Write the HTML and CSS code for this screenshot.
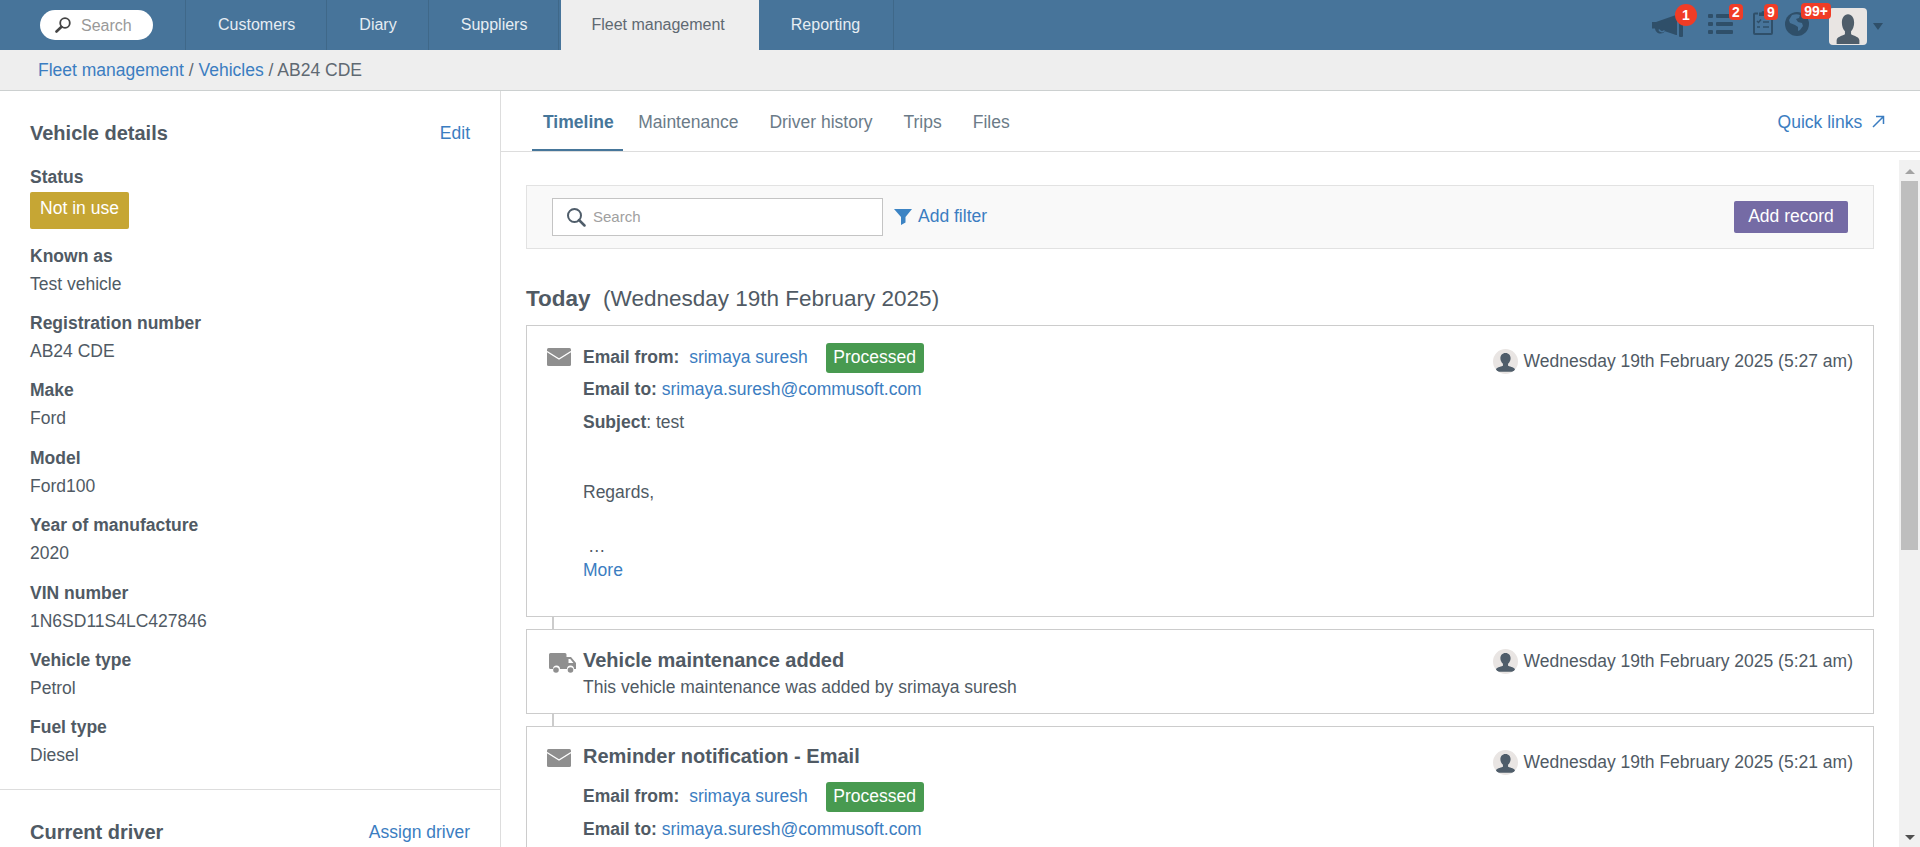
FILE: index.html
```html
<!DOCTYPE html>
<html lang="en">
<head>
    <meta charset="UTF-8">
    <meta name="viewport" content="width=device-width, initial-scale=1.0">
    <title>AB24 CDE - Fleet management</title>
    <link rel="stylesheet" href="styles.css">
</head>
<body>
    <svg class="sprites" width="0" height="0" aria-hidden="true">
        <symbol id="icon-envelope" viewBox="0 0 24 18">
            <rect width="24" height="18" rx="1.5" fill="#8f8f8f"/>
            <path d="M0 3.5 12 11 24 3.5" fill="none" stroke="#fff" stroke-width="1.4"/>
        </symbol>
        <symbol id="icon-person" viewBox="3 3 32 32" preserveAspectRatio="none">
            <path d="M19 5c-4.400 0-7 3.400-7 8 0 3.400 1.500 6.300 3.500 8v3c-4 1.700-9 2.500-9.500 5.500V33h26v-3.500c-.5-3-5.500-3.800-9.500-5.500v-3c2-1.700 3.500-4.600 3.500-8 0-4.600-2.600-8-7-8z" fill="#4f5d6a"/>
        </symbol>
    </svg>

    <header class="topbar">
        <div class="topbar-search">
            <svg class="topbar-search-icon" width="16" height="16" viewBox="0 0 16 16">
                <circle cx="10" cy="6" r="4.800" fill="none" stroke="#444" stroke-width="1.800"/>
                <path d="M6.500 9.800 1.500 14.500" stroke="#444" stroke-width="2.600" stroke-linecap="round"/>
            </svg>
            <span>Search</span>
        </div>
        <nav class="topbar-tabs">
            <a class="topbar-tab">Customers</a>
            <a class="topbar-tab">Diary</a>
            <a class="topbar-tab">Suppliers</a>
            <a class="topbar-tab active">Fleet management</a>
            <a class="topbar-tab">Reporting</a>
        </nav>
        <div class="topbar-icons">
            <div class="topbar-icon icon-megaphone">
                <svg width="32" height="22" viewBox="0 0 32 22">
                    <path d="M0 7h4l20-7h1v20h-1L13 16.200a5.500 5.500 0 0 1-10-2.600H0z" fill="#2f4f69"/>
                    <path d="M7 14.500a3.200 3.200 0 0 0 5.500 1" fill="none" stroke="#47749a" stroke-width="1.500"/>
                    <rect x="27" width="4" height="22" rx="1" fill="#2f4f69"/>
                </svg>
                <span class="count round">1</span>
            </div>
            <div class="topbar-icon icon-list">
                <svg width="25" height="22" viewBox="0 0 25 22">
                    <g fill="#2f4f69">
                        <rect y="1" width="5" height="4" rx="1"/><rect x="8" y="1" width="17" height="4" rx="1"/>
                        <rect y="9" width="5" height="4" rx="1"/><rect x="8" y="9" width="17" height="4" rx="1"/>
                        <rect y="17" width="5" height="4" rx="1"/><rect x="8" y="17" width="17" height="4" rx="1"/>
                    </g>
                </svg>
                <span class="count">2</span>
            </div>
            <div class="topbar-icon icon-clip">
                <svg width="20" height="25" viewBox="0 0 20 25">
                    <path d="M5 3.500H2a1 1 0 0 0-1 1V23a1 1 0 0 0 1 1h16a1 1 0 0 0 1-1V4.500a1 1 0 0 0-1-1h-3" fill="none" stroke="#2f4f69" stroke-width="2"/>
                    <path d="M6 5V2.500h2.500a1.500 1.500 0 0 1 3 0H14V6H6z" fill="#2f4f69"/>
                    <path d="M4 11l1.500 1.500L8 9.500M4 17h3M10 12h6M10 17h6" fill="none" stroke="#2f4f69" stroke-width="1.500"/>
                </svg>
                <span class="count">9</span>
            </div>
            <div class="topbar-icon icon-globe">
                <svg width="24" height="24" viewBox="0 0 24 24">
                    <circle cx="12" cy="12" r="12" fill="#2f4f69"/>
                    <path d="M7 3c3-1 6-1 8 0l-1 3-3 1 2 3 4 1 1 3-3 4-2 1 0-4-3-2-5-2-1-3z" fill="#47749a"/>
                </svg>
                <span class="count wide">99+</span>
            </div>
            <div class="topbar-avatar">
                <svg width="28" height="34"><use href="#icon-person"/></svg>
            </div>
            <span class="topbar-caret"></span>
        </div>
    </header>

    <div class="breadcrumbs">
        <a>Fleet management</a> / <a>Vehicles</a> / AB24 CDE
    </div>

    <div class="page">
        <aside class="sidebar">
            <section class="side-section">
                <div class="side-head">
                    <h2>Vehicle details</h2>
                    <a>Edit</a>
                </div>
                <div class="field field-status">
                    <div class="field-label">Status</div>
                    <span class="status-badge">Not in use</span>
                </div>
                <div class="field"><div class="field-label">Known as</div><div>Test vehicle</div></div>
                <div class="field"><div class="field-label">Registration number</div><div>AB24 CDE</div></div>
                <div class="field"><div class="field-label">Make</div><div>Ford</div></div>
                <div class="field"><div class="field-label">Model</div><div>Ford100</div></div>
                <div class="field"><div class="field-label">Year of manufacture</div><div>2020</div></div>
                <div class="field"><div class="field-label">VIN number</div><div>1N6SD11S4LC427846</div></div>
                <div class="field"><div class="field-label">Vehicle type</div><div>Petrol</div></div>
                <div class="field"><div class="field-label">Fuel type</div><div>Diesel</div></div>
            </section>
            <section class="side-section driver">
                <div class="side-head">
                    <h2>Current driver</h2>
                    <a>Assign driver</a>
                </div>
            </section>
        </aside>

        <main class="content">
            <div class="content-tabs">
                <a class="content-tab active">Timeline</a>
                <a class="content-tab">Maintenance</a>
                <a class="content-tab">Driver history</a>
                <a class="content-tab">Trips</a>
                <a class="content-tab">Files</a>
                <a class="quick-links">Quick links
                    <svg width="13" height="13" viewBox="0 0 13 13"><path d="M1 12 11.500 1.500M4 1.500h7.500V9" fill="none" stroke="#3b7dc1" stroke-width="1.500"/></svg>
                </a>
            </div>

            <div class="content-body">
                <div class="timeline">
                    <div class="filter-bar">
                        <label class="filter-search">
                            <svg width="20" height="20" viewBox="0 0 20 20">
                                <circle cx="8.500" cy="8.500" r="6.500" fill="none" stroke="#4f5d6a" stroke-width="2"/>
                                <path d="M13 13l5.500 5.500" stroke="#4f5d6a" stroke-width="2.500" stroke-linecap="round"/>
                            </svg>
                            <input type="text" placeholder="Search">
                        </label>
                        <svg class="filter-icon" width="18" height="16" viewBox="0 0 18 16"><path d="M0 0h18l-6.500 8v5.500L7 16V8z" fill="#3c84c4"/></svg>
                        <a class="add-filter">Add filter</a>
                        <button class="add-record">Add record</button>
                    </div>

                    <h3 class="day-title"><b>Today</b>&nbsp; (Wednesday 19th February 2025)</h3>

                    <article class="card card-email">
                        <svg class="card-icon" width="24" height="18"><use href="#icon-envelope"/></svg>
                        <div class="card-body">
                            <div class="line line-from"><b>Email from:</b> <a class="sender">srimaya suresh</a><span class="state">Processed</span></div>
                            <div class="line"><b>Email to:</b> <a>srimaya.suresh@commusoft.com</a></div>
                            <div class="line subject"><b>Subject</b>: test</div>
                            <div class="regards">Regards,</div>
                            <div class="ellipsis">&hellip;</div>
                            <a class="more">More</a>
                        </div>
                        <div class="stamp">
                            <svg class="stamp-avatar" width="25" height="25"><use href="#icon-person" x="0.8" y="2.6" width="23.4" height="21.5"/></svg>
                            Wednesday 19th February 2025 (5:27 am)
                        </div>
                    </article>
                    <div class="connector"></div>

                    <article class="card card-maint">
                        <svg class="card-icon truck" width="28" height="21" viewBox="0 0 28 21">
                            <path d="M1.500 0H16a1.500 1.500 0 0 1 1.500 1.500V4h4.500l5 6v6h-2a3.500 3.500 0 0 0-7 0h-7a3.500 3.500 0 0 0-7 0H1.500A1.500 1.500 0 0 1 0 14.500v-13A1.500 1.500 0 0 1 1.500 0zM19.500 6v4h5l-3.300-4z" fill="#8f8f8f" fill-rule="evenodd"/>
                            <circle cx="7" cy="17" r="2.800" fill="#8f8f8f"/>
                            <circle cx="21.500" cy="17" r="2.800" fill="#8f8f8f"/>
                        </svg>
                        <div class="card-body">
                            <h4>Vehicle maintenance added</h4>
                            <div class="summary">This vehicle maintenance was added by srimaya suresh</div>
                        </div>
                        <div class="stamp">
                            <svg class="stamp-avatar" width="25" height="25"><use href="#icon-person" x="0.8" y="2.6" width="23.4" height="21.5"/></svg>
                            Wednesday 19th February 2025 (5:21 am)
                        </div>
                    </article>
                    <div class="connector"></div>

                    <article class="card card-reminder">
                        <svg class="card-icon" width="24" height="18"><use href="#icon-envelope"/></svg>
                        <div class="card-body">
                            <h4>Reminder notification - Email</h4>
                            <div class="line line-from"><b>Email from:</b> <a class="sender">srimaya suresh</a><span class="state">Processed</span></div>
                            <div class="line"><b>Email to:</b> <a>srimaya.suresh@commusoft.com</a></div>
                        </div>
                        <div class="stamp">
                            <svg class="stamp-avatar" width="25" height="25"><use href="#icon-person" x="0.8" y="2.6" width="23.4" height="21.5"/></svg>
                            Wednesday 19th February 2025 (5:21 am)
                        </div>
                    </article>
                </div>

                <div class="scrollbar">
                    <span class="scroll-up"></span>
                    <span class="scroll-thumb"></span>
                    <span class="scroll-down"></span>
                </div>
            </div>
        </main>
    </div>
</body>
</html>
```

FILE: styles.css
```css
/* General Styles */
* {
    box-sizing: border-box;
}

html, body {
    height: 100%;
}

body {
    font-family: 'Liberation Sans', Arial, sans-serif;
    font-size: 17.5px;
    color: #505a64;
    background: #fff;
    margin: 0;
    display: flex;
    flex-direction: column;
    overflow: hidden;
}

a {
    color: #3b7dc1;
}

.sprites {
    position: absolute;
}

/* Top bar */
.topbar {
    height: 50px;
    flex: none;
    display: flex;
    align-items: stretch;
    background: #47749a;
    font-size: 16px;
}

.topbar-search {
    width: 113px;
    height: 30px;
    margin: 10px 32px 0 40px;
    padding-left: 15px;
    display: flex;
    align-items: center;
    gap: 10px;
    background: #fff;
    border-radius: 15px;
    color: #999;
}

.topbar-search span {
    margin-top: 2px;
}

.topbar-tabs {
    display: flex;
    border-left: 1px solid #3f6889;
}

.topbar-tab {
    padding: 0 31px 0 32px;
    line-height: 50px;
    color: #e6edf3;
    border-right: 1px solid #3f6889;
}

.topbar-tab.active {
    margin-left: 2px;
    padding: 0 34px 0 30px;
    background: #eee;
    color: #5f6972;
    border-right: none;
}

.topbar-tab:last-child {
    padding-right: 33px;
}

.topbar-icons {
    margin-left: auto;
    display: flex;
    margin-right: 37px;
}

.topbar-icon {
    position: relative;
}

.icon-megaphone {
    margin-top: 15px;
    margin-right: 24px;
}

.icon-list {
    margin-top: 13px;
    margin-right: 20px;
}

.icon-clip {
    margin-top: 10px;
    margin-right: 12px;
}

.icon-globe {
    margin-top: 12px;
    margin-right: 20px;
}

.count {
    position: absolute;
    left: 21px;
    top: -9px;
    min-width: 14px;
    height: 16px;
    padding: 0 2px;
    border-radius: 4px;
    background: #f03c26;
    color: #fff;
    font-size: 14px;
    font-weight: bold;
    line-height: 16px;
    text-align: center;
}

.icon-clip .count {
    left: 11px;
    top: -6px;
}

.count.round {
    left: 23px;
    top: -11px;
    width: 22px;
    height: 22px;
    border-radius: 50%;
    line-height: 22px;
}

.count.wide {
    left: 16px;
    top: -9px;
    width: 30px;
    padding: 0;
}

.topbar-avatar {
    width: 38px;
    height: 37px;
    margin-top: 8px;
    padding: 4px 5px 0;
    background: #e9e5e3;
    border-radius: 4px;
}

.topbar-caret {
    margin: 23px 0 0 6px;
    border-left: 5.500px solid transparent;
    border-right: 5.500px solid transparent;
    border-top: 7px solid #2f4f69;
    height: 0;
}

/* Breadcrumbs */
.breadcrumbs {
    height: 41px;
    flex: none;
    padding-left: 38px;
    line-height: 40px;
    background: #eee;
    border-bottom: 1px solid #ccd0d0;
    color: #5f6972;
}

/* Page */
.page {
    flex: 1;
    min-height: 0;
    display: flex;
}

.sidebar {
    width: 501px;
    flex: none;
    border-right: 1px solid #ddd;
    overflow: hidden;
}

.side-section {
    padding: 30px 30px 0;
}

.side-head {
    display: flex;
    justify-content: space-between;
    align-items: center;
    height: 24px;
}

.side-head h2 {
    margin: 0;
    font-size: 20px;
}

.field {
    line-height: 28px;
    margin-bottom: 11.400px;
}

.field-label {
    font-weight: bold;
}

.field-status {
    margin-top: 17.500px;
    margin-bottom: 12.700px;
}

.status-badge {
    display: block;
    width: 99px;
    height: 37px;
    margin-top: 1.500px;
    line-height: 33px;
    text-align: center;
    color: #fff;
    background: #c6a634;
    border-radius: 2px;
}

.driver {
    margin-top: 20px;
    padding-top: 30px;
    border-top: 1px solid #ddd;
}

/* Content */
.content {
    flex: 1;
    min-width: 0;
    display: flex;
    flex-direction: column;
}

.content-tabs {
    height: 61px;
    flex: none;
    padding-left: 31px;
    display: flex;
    border-bottom: 1px solid #ddd;
}

.content-tab {
    padding: 3px 15.500px 0;
    line-height: 57px;
    color: #6b7b88;
}

.content-tab.active {
    padding: 3px 9px 0 11px;
    font-weight: bold;
    color: #46769a;
    height: 60px;
    border-bottom: 2px solid #46769a;
}

.quick-links {
    margin-left: auto;
    margin-right: 35px;
    padding-top: 3px;
    line-height: 57px;
}

.quick-links svg {
    margin-left: 5px;
}

.content-body {
    flex: 1;
    min-height: 0;
    display: flex;
}

.timeline {
    flex: 1;
    min-width: 0;
    padding: 33px 25px 0;
    overflow: hidden;
}

.filter-bar {
    height: 64px;
    padding: 0 25px;
    display: flex;
    align-items: center;
    background: #f9f9f9;
    border: 1px solid #e2e2e2;
}

.filter-search {
    width: 331px;
    height: 38px;
    padding-left: 13px;
    display: flex;
    align-items: center;
    gap: 5px;
    background: #fff;
    border: 1px solid #c4c4c4;
}

.filter-search input {
    border: none;
    outline: none;
    flex: 1;
    padding: 0 2px 2px;
    font: 15px 'Liberation Sans', Arial, sans-serif;
}

.filter-search input::placeholder {
    color: #a0a0a0;
}

.filter-icon {
    margin-left: 11px;
}

.add-filter {
    margin: 0 0 2px 6px;
}

.add-record {
    margin-left: auto;
    width: 114px;
    height: 32px;
    padding: 0 0 2px;
    font: 17.5px 'Liberation Sans', Arial, sans-serif;
    color: #fff;
    background: #756ba5;
    border: none;
    border-radius: 2px;
}

.day-title {
    margin: 37px 0 13px;
    font-size: 22.500px;
    font-weight: normal;
    line-height: 26px;
}

.card {
    display: flex;
    padding: 0 20px;
    border: 1px solid #ccc;
}

.card-icon {
    flex: none;
    margin-right: 12px;
    margin-top: 22px;
}

.card-icon.truck {
    margin: 23px 6px 0 2px;
}

.card-body {
    flex: 1;
    min-width: 0;
}

.card-body h4 {
    margin: 0;
    font-size: 20px;
    line-height: 24px;
}

.line {
    line-height: 32px;
}

.line-from {
    padding-top: 1px;
}

.subject {
    padding-top: 1px;
}

.sender {
    margin-left: 5px;
}

.state {
    display: inline-block;
    height: 30px;
    margin-left: 18px;
    padding: 0 7.500px;
    line-height: 28px;
    color: #fff;
    background: #489a50;
    border-radius: 3px;
}

.regards {
    margin-top: 40px;
    line-height: 28px;
}

.ellipsis {
    margin: 26px 0 0 5px;
    line-height: 28px;
}

.more {
    display: block;
    line-height: 20px;
}

.stamp {
    flex: none;
    display: flex;
    align-items: center;
    gap: 6px;
    height: 25px;
    margin-top: 23px;
}

.stamp-avatar {
    background: #e9e5e3;
    border-radius: 50%;
}

.connector {
    width: 2px;
    height: 12px;
    margin-left: 26px;
    background: #ccc;
}

.card-email {
    height: 292px;
}

.card-email .card-body {
    padding-top: 14px;
}

.card-maint {
    height: 85px;
}

.card-maint .card-body {
    padding-top: 18px;
}

.card-maint .stamp {
    margin-top: 19px;
}

.summary {
    margin-top: 3px;
    line-height: 24px;
}

.card-reminder {
    height: 200px;
}

.card-reminder .card-body {
    padding-top: 17px;
}

.card-reminder .line-from {
    margin-top: 11px;
    padding-bottom: 1px;
}

/* Scrollbar */
.scrollbar {
    width: 21px;
    margin-top: 8px;
    flex: none;
    display: flex;
    flex-direction: column;
    align-items: center;
    background: #f1f1f1;
}

.scroll-up,
.scroll-down {
    border-left: 5px solid transparent;
    border-right: 5px solid transparent;
}

.scroll-up {
    margin-top: 9px;
    border-bottom: 5px solid #a3a3a3;
}

.scroll-thumb {
    width: 17px;
    height: 369px;
    margin-top: 7px;
    background: #bebebe;
}

.scroll-down {
    margin-top: auto;
    margin-bottom: 7px;
    border-top: 5px solid #505050;
}
```
